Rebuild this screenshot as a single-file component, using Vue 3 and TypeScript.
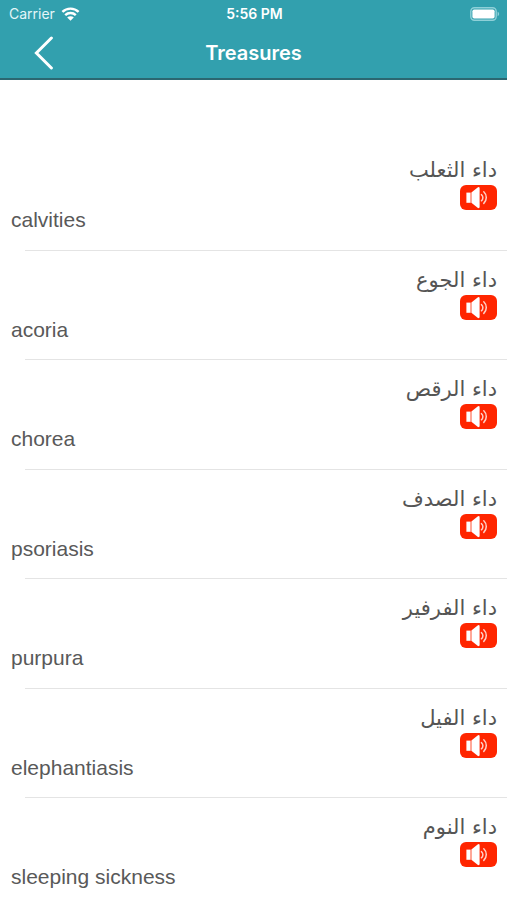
<script setup lang="ts">
interface Term {
  arabic: string
  english: string
}

const terms: Term[] = [
  { arabic: 'داء الثعلب', english: 'calvities' },
  { arabic: 'داء الجوع', english: 'acoria' },
  { arabic: 'داء الرقص', english: 'chorea' },
  { arabic: 'داء الصدف', english: 'psoriasis' },
  { arabic: 'داء الفرفير', english: 'purpura' },
  { arabic: 'داء الفيل', english: 'elephantiasis' },
  { arabic: 'داء النوم', english: 'sleeping sickness' },
]

function speak(term: Term): void {
  if (!('speechSynthesis' in window)) return
  const utterance = new SpeechSynthesisUtterance(term.english)
  utterance.lang = 'en'
  window.speechSynthesis.speak(utterance)
}

function goBack(): void {
  window.history.back()
}
</script>

<template>
  <div class="screen">
    <header class="top">
      <div class="status">
        <div class="carrier">
          <span>Carrier</span>
          <svg class="wifi" viewBox="0 0 18 14" aria-hidden="true">
            <path d="M0.9 4.9a11.6 11.6 0 0 1 16.2 0" />
            <path d="M3.7 8.1a7.6 7.6 0 0 1 10.6 0" />
            <path class="dot" d="M9 13.8 5.7 10.6a4.7 4.7 0 0 1 6.6 0z" />
          </svg>
        </div>
        <span class="clock">5:56 PM</span>
        <div class="power">
          <svg class="battery" viewBox="0 0 30 14" aria-hidden="true">
            <rect class="shell" x="0.8" y="0.8" width="25.4" height="12.4" rx="3.6" />
            <rect class="charge" x="2.4" y="2.4" width="22.2" height="9.2" rx="1.8" />
            <path class="tip" d="M27.6 4.8c2 .7 2 3.7 0 4.4z" />
          </svg>
        </div>
      </div>
      <nav class="bar">
        <button class="back" type="button" aria-label="Back" @click="goBack">
          <svg viewBox="0 0 20 34" aria-hidden="true">
            <path d="M17.4 2 2.4 17l15 15" />
          </svg>
        </button>
        <h1 class="title">Treasures</h1>
      </nav>
    </header>

    <ul class="list">
      <li v-for="term in terms" :key="term.english" class="row">
        <p class="arabic" lang="ar" dir="rtl">{{ term.arabic }}</p>
        <button class="speaker" type="button" :aria-label="term.english" @click="speak(term)">
          <svg viewBox="0 0 37 25" aria-hidden="true">
            <path class="solid" d="M6.4 7.6h4.2v10.2H6.4z" />
            <path class="solid" d="M11.4 7.6 17.6 2.4q2-1.2 2 1v18.4q0 2.2-2 1l-6.2-5z" />
            <path class="wave" d="M21.4 9.6a4 4 0 0 1 0 6.2" />
            <path class="wave" d="M23.8 6.8a8 8 0 0 1 0 11.6" />
          </svg>
        </button>
        <p class="english">{{ term.english }}</p>
      </li>
    </ul>
  </div>
</template>

<style>
body {
  margin: 0;
  background: #fff;
}
</style>

<style scoped>
.screen {
  font-family: "Liberation Sans", Arial, sans-serif;
  color: #595959;
}

.top {
  background: #32a0ae;
  border-bottom: 2px solid #2b6771;
  color: #fff;
  font-family: Inter, "Liberation Sans", sans-serif;
}

.status {
  display: grid;
  grid-template-columns: 1fr auto 1fr;
  align-items: center;
  height: 27px;
  padding: 0 7px 0 9px;
  font-size: 14px;
  line-height: 27px;
}

.carrier {
  display: flex;
  align-items: center;
  gap: 6px;
  color: #e4f6f8;
}

.wifi {
  width: 19px;
  height: 14px;
  fill: none;
  stroke: #fff;
  stroke-width: 2.4;
}

.wifi .dot {
  fill: #fff;
  stroke: none;
}

.clock {
  font-weight: 600;
}

.power {
  display: flex;
  justify-content: flex-end;
}

.battery {
  width: 30px;
  height: 14px;
}

.shell {
  fill: none;
  stroke: #8fd0d8;
  stroke-width: 1.4;
}

.charge {
  fill: #fff;
}

.tip {
  fill: #8fd0d8;
}

.bar {
  display: grid;
  grid-template-columns: 1fr auto 1fr;
  align-items: center;
  height: 51px;
}

.back {
  justify-self: start;
  display: flex;
  margin: 0 0 0 34px;
  padding: 0;
  border: 0;
  background: none;
  cursor: pointer;
}

.back svg {
  width: 20px;
  height: 34px;
  fill: none;
  stroke: #fff;
  stroke-width: 3;
  stroke-linecap: round;
}

.title {
  margin: 0;
  font-size: 20px;
  font-weight: 600;
  line-height: 24px;
}

.list {
  display: grid;
  grid-auto-rows: 1fr;
  min-height: 767px;
  margin: 61px 0 0;
  padding: 0;
  list-style: none;
}

.row {
  position: relative;
  display: flex;
  flex-direction: column;
  box-sizing: border-box;
  padding: 14px 10px 0 11px;
}

.row::after {
  content: "";
  position: absolute;
  right: 0;
  bottom: 0;
  left: 25px;
  height: 1px;
  background: #e4e4e4;
}

.arabic {
  margin: 0;
  font-family: "DejaVu Sans", sans-serif;
  font-size: 21px;
  line-height: 30px;
  color: #555;
}

.speaker {
  align-self: flex-end;
  display: flex;
  padding: 0;
  border: 0;
  border-radius: 6px;
  background: #ff2600;
  cursor: pointer;
}

.speaker svg {
  width: 37px;
  height: 25px;
}

.solid {
  fill: #fff;
}

.wave {
  fill: none;
  stroke: #ffd0c6;
  stroke-width: 1.5;
  stroke-linecap: round;
}

.english {
  margin: 0;
  font-size: 21px;
  line-height: 20px;
}
</style>
